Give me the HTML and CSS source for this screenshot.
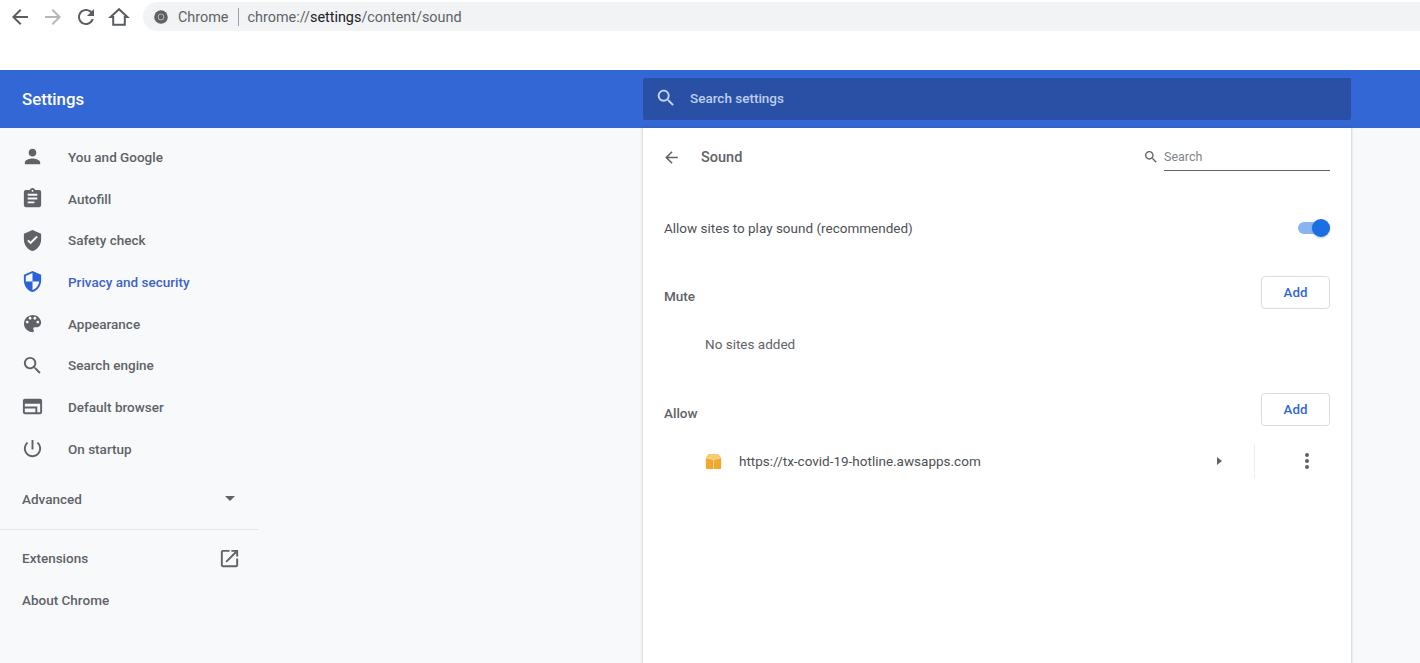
FILE: index.html
```html
<!DOCTYPE html>
<html lang="en">
<head>
    <meta charset="UTF-8">
    <title>Settings - Sound</title>
    <link rel="stylesheet" href="styles.css">
</head>
<body>

<!-- Browser toolbar -->
<div class="toolbar">
    <div class="tool-buttons">
        <svg class="tool-icon" viewBox="0 0 24 24"><path d="M20 11H7.83l5.59-5.59L12 4l-8 8 8 8 1.41-1.41L7.83 13H20v-2z"/></svg>
        <svg class="tool-icon disabled" viewBox="0 0 24 24"><path d="M4 11h12.17l-5.59-5.59L12 4l8 8-8 8-1.41-1.41L16.17 13H4v-2z"/></svg>
        <svg class="tool-icon" viewBox="0 0 24 24"><path d="M17.65 6.35C16.2 4.9 14.21 4 12 4c-4.42 0-7.99 3.58-7.99 8s3.57 8 7.99 8c3.73 0 6.84-2.55 7.73-6h-2.08c-.82 2.33-3.04 4-5.65 4-3.31 0-6-2.69-6-6s2.69-6 6-6c1.66 0 3.14.69 4.22 1.78L13 11h7V4l-2.35 2.35z"/></svg>
        <svg class="tool-icon" viewBox="0 0 24 24"><path class="home-line" d="M12 4.2 3.6 12h2.6v7.8h11.6V12h2.6z"/></svg>
    </div>
    <div class="address-bar">
        <svg class="chrome-icon" viewBox="0 0 16 16">
            <circle cx="8" cy="8" r="6.8" fill="#5f6368"/>
            <circle cx="8" cy="8" r="3.2" fill="#b9bcbf"/>
            <circle cx="8" cy="8" r="2.4" fill="#5f6368"/>
        </svg>
        <span class="origin">Chrome</span>
        <span class="origin-sep"></span>
        <span class="url">chrome://<b>settings</b>/content/sound</span>
    </div>
</div>

<!-- Settings header -->
<header class="header">
    <div class="header-title">Settings</div>
    <div class="header-search">
        <svg class="header-search-icon" viewBox="0 0 24 24"><path d="M15.5 14h-.79l-.28-.27C15.41 12.59 16 11.11 16 9.5 16 5.91 13.09 3 9.5 3S3 5.91 3 9.5 5.91 16 9.5 16c1.61 0 3.09-.59 4.23-1.57l.27.28v.79l5 4.99L20.49 19l-4.99-5zm-6 0C7.01 14 5 11.99 5 9.5S7.01 5 9.5 5 14 7.01 14 9.5 11.99 14 9.5 14z"/></svg>
        <span>Search settings</span>
    </div>
</header>

<div class="main">
    <nav class="sidebar">
        <div class="nav-item">
            <svg class="nav-icon" viewBox="0 0 24 24"><path d="M12 12c2.21 0 4-1.79 4-4s-1.79-4-4-4-4 1.79-4 4 1.79 4 4 4zm0 2c-2.67 0-8 1.34-8 4v2h16v-2c0-2.66-5.33-4-8-4z"/></svg>
            <span class="nav-label">You and Google</span>
        </div>
        <div class="nav-item">
            <svg class="nav-icon" viewBox="0 0 24 24"><path d="M19 3h-4.18C14.4 1.84 13.3 1 12 1c-1.3 0-2.4.84-2.82 2H5c-1.1 0-2 .9-2 2v14c0 1.1.9 2 2 2h14c1.1 0 2-.9 2-2V5c0-1.1-.9-2-2-2zm-7 0c.55 0 1 .45 1 1s-.45 1-1 1-1-.45-1-1 .45-1 1-1zm2 14H7v-2h7v2zm3-4H7v-2h10v2zm0-4H7V7h10v2z"/></svg>
            <span class="nav-label">Autofill</span>
        </div>
        <div class="nav-item">
            <svg class="nav-icon" viewBox="0 0 24 24"><path fill-rule="evenodd" d="M12 1 3 5v6c0 5.55 3.84 10.74 9 12 5.16-1.26 9-6.45 9-12V5l-9-4zm-2 15-3.5-3.5 1.41-1.41L10 13.17l6.09-6.08 1.41 1.41L10 16z"/></svg>
            <span class="nav-label">Safety check</span>
        </div>
        <div class="nav-item active">
            <svg class="nav-icon" viewBox="0 0 24 24"><path d="M12 1 3 5v6c0 5.55 3.84 10.74 9 12 5.16-1.26 9-6.45 9-12V5l-9-4zm0 10.99h7c-.53 4.12-3.28 7.79-7 8.94V12H5V6.3l7-3.11v8.8z"/></svg>
            <span class="nav-label">Privacy and security</span>
        </div>
        <div class="nav-item">
            <svg class="nav-icon" viewBox="0 0 24 24"><path d="M12 3a9 9 0 0 0 0 18c.83 0 1.5-.67 1.5-1.5 0-.39-.15-.74-.39-1.01-.23-.26-.38-.61-.38-.99 0-.83.67-1.5 1.5-1.5H16c2.76 0 5-2.24 5-5 0-4.42-4.03-8-9-8zm-5.5 9c-.83 0-1.5-.67-1.5-1.5S5.67 9 6.5 9 8 9.67 8 10.5 7.33 12 6.5 12zm3-4C8.67 8 8 7.33 8 6.5S8.67 5 9.5 5s1.5.67 1.5 1.5S10.33 8 9.5 8zm5 0c-.83 0-1.5-.67-1.5-1.5S13.67 5 14.5 5s1.5.67 1.5 1.5S15.33 8 14.5 8zm3 4c-.83 0-1.5-.67-1.5-1.5S16.67 9 17.5 9s1.5.67 1.5 1.5-.67 1.5-1.5 1.5z"/></svg>
            <span class="nav-label">Appearance</span>
        </div>
        <div class="nav-item">
            <svg class="nav-icon" viewBox="0 0 24 24"><path d="M15.5 14h-.79l-.28-.27C15.41 12.59 16 11.11 16 9.5 16 5.91 13.09 3 9.5 3S3 5.91 3 9.5 5.91 16 9.5 16c1.61 0 3.09-.59 4.23-1.57l.27.28v.79l5 4.99L20.49 19l-4.99-5zm-6 0C7.01 14 5 11.99 5 9.5S7.01 5 9.5 5 14 7.01 14 9.5 11.99 14 9.5 14z"/></svg>
            <span class="nav-label">Search engine</span>
        </div>
        <div class="nav-item">
            <svg class="nav-icon" viewBox="0 0 24 24"><path fill-rule="evenodd" d="M4 4h16c1.1 0 2 .9 2 2v12c0 1.1-.9 2-2 2H4c-1.1 0-2-.9-2-2V6c0-1.1.9-2 2-2zm0 5v9h16V9H4zm0 3h11v2H4v-2zm11 0h2v6h-2v-6z"/></svg>
            <span class="nav-label">Default browser</span>
        </div>
        <div class="nav-item">
            <svg class="nav-icon" viewBox="0 0 24 24"><path d="M13 3h-2v10h2V3zm4.83 2.17-1.42 1.42C17.99 7.86 19 9.81 19 12c0 3.87-3.13 7-7 7s-7-3.13-7-7c0-2.19 1.01-4.14 2.58-5.42L6.17 5.17C4.23 6.82 3 9.26 3 12c0 4.97 4.03 9 9 9s9-4.03 9-9c0-2.74-1.23-5.18-3.17-6.83z"/></svg>
            <span class="nav-label">On startup</span>
        </div>

        <div class="nav-advanced">
            <span>Advanced</span>
            <span class="caret-down"></span>
        </div>
        <div class="nav-divider"></div>
        <div class="nav-link">
            <span>Extensions</span>
            <svg class="nav-icon" viewBox="0 0 24 24"><path d="M19 19H5V5h7V3H5c-1.11 0-2 .9-2 2v14c0 1.1.89 2 2 2h14c1.1 0 2-.9 2-2v-7h-2v7zM14 3v2h3.59l-9.83 9.83 1.41 1.41L19 6.41V10h2V3h-7z"/></svg>
        </div>
        <div class="nav-link">
            <span>About Chrome</span>
        </div>
    </nav>

    <section class="card">
        <div class="card-head">
            <svg class="back-icon" viewBox="0 0 24 24"><path d="M20 11H7.83l5.59-5.59L12 4l-8 8 8 8 1.41-1.41L7.83 13H20v-2z"/></svg>
            <h1 class="card-title">Sound</h1>
            <svg class="sub-search-icon" viewBox="0 0 24 24"><path d="M15.5 14h-.79l-.28-.27C15.41 12.59 16 11.11 16 9.5 16 5.91 13.09 3 9.5 3S3 5.91 3 9.5 5.91 16 9.5 16c1.61 0 3.09-.59 4.23-1.57l.27.28v.79l5 4.99L20.49 19l-4.99-5zm-6 0C7.01 14 5 11.99 5 9.5S7.01 5 9.5 5 14 7.01 14 9.5 11.99 14 9.5 14z"/></svg>
            <div class="sub-search">Search</div>
        </div>

        <div class="toggle-row">
            <span>Allow sites to play sound (recommended)</span>
            <span class="toggle"><span class="toggle-knob"></span></span>
        </div>

        <div class="list-head mute-head">
            <span class="list-title">Mute</span>
            <button class="add-btn" type="button">Add</button>
        </div>
        <div class="no-sites">No sites added</div>

        <div class="list-head allow-head">
            <span class="list-title">Allow</span>
            <button class="add-btn" type="button">Add</button>
        </div>
        <div class="site-row">
            <svg class="site-icon" viewBox="0 0 16 16">
                <path fill="#f0a92f" d="M3.5 1.2h9L15.2 4.6V14a1 1 0 0 1-1 1H1.800a1 1 0 0 1-1-1V4.600z"/>
                <path fill="#f8ca74" d="M3.500 1.200h9l2.700 3.400L8 6.200.8 4.600z"/>
                <path fill="none" stroke="#fbdca4" stroke-width=".7" d="M.8 4.600 8 6.200l7.200-1.600M8 6.200V15"/>
            </svg>
            <span class="site-url">https://tx-covid-19-hotline.awsapps.com</span>
            <span class="caret-right"></span>
            <span class="site-sep"></span>
            <span class="more-dots"><i></i><i></i><i></i></span>
        </div>
    </section>
</div>

</body>
</html>
```

FILE: styles.css
```css
* {
    box-sizing: border-box;
}

html, body {
    height: 100%;
}

body {
    margin: 0;
    font-family: Roboto, "Liberation Sans", sans-serif;
    background: #f8f9fa;
    color: #5f6368;
    overflow: hidden;
}

/* browser toolbar */
.toolbar {
    height: 70px;
    background: #fff;
    display: flex;
    align-items: flex-start;
    padding: 2px 0 0 8px;
}

.tool-buttons {
    display: flex;
    gap: 9px;
    height: 30px;
    align-items: center;
    margin-right: 12px;
}

.tool-icon {
    width: 24px;
    height: 24px;
    fill: #5a5d61;
}

.tool-icon.disabled {
    fill: #b4b6b8;
}

.home-line {
    fill: none;
    stroke: #5a5d61;
    stroke-width: 2;
}

.address-bar {
    flex: 1;
    height: 29px;
    background: #f1f3f4;
    border-radius: 15px 0 0 15px;
    display: flex;
    align-items: center;
    padding-left: 10px;
    padding-top: 1px;
    font-size: 14.4px;
}

.chrome-icon {
    width: 16px;
    height: 16px;
    margin-right: 9px;
}

.origin {
    color: #5f6368;
}

.origin-sep {
    width: 1px;
    height: 18px;
    background: #9aa0a6;
    margin: 0 9px;
}

.url {
    color: #5f6368;
}

.url b {
    font-weight: 400;
    color: #202124;
}

/* settings header */
.header {
    height: 58px;
    background: #3367d6;
    display: flex;
    align-items: center;
    padding-left: 22px;
}

.header-title {
    width: 621px;
    color: #fff;
    font-size: 16.8px;
    font-weight: 500;
}

.header-search {
    width: 708px;
    height: 42px;
    background: #2a50a6;
    border-radius: 2px;
    display: flex;
    align-items: center;
    padding-left: 11px;
    padding-bottom: 2px;
    color: #bdcdf0;
    font-size: 13.5px;
    font-weight: 500;
}

.header-search-icon {
    width: 22px;
    height: 22px;
    fill: #c6d4f2;
    margin-left: 1px;
    margin-right: 13px;
}

/* layout */
.main {
    display: flex;
    height: 535px;
}

.sidebar {
    width: 258px;
    padding-top: 8px;
    margin-right: 385px;
    font-size: 13.5px;
    font-weight: 500;
}

.nav-item {
    height: 41.7px;
    display: flex;
    align-items: center;
    padding-left: 21px;
}

.nav-item .nav-icon {
    margin-right: 24px;
}

.nav-item.active {
    color: #3f63c8;
}

.nav-item.active .nav-icon {
    fill: #2a62d8;
}

.nav-icon {
    width: 23px;
    height: 23px;
    fill: #5f6368;
    flex-shrink: 0;
}

.nav-advanced {
    height: 42px;
    margin-top: 8px;
    padding: 0 23px 0 22px;
    display: flex;
    align-items: center;
    justify-content: space-between;
}

.caret-down {
    width: 0;
    height: 0;
    border-left: 5px solid transparent;
    border-right: 5px solid transparent;
    border-top: 5px solid #5f6368;
}

.nav-divider {
    height: 1px;
    background: #e3e5e8;
    margin-top: 9px;
    margin-bottom: 8px;
}

.nav-link {
    height: 41.7px;
    display: flex;
    align-items: center;
    justify-content: space-between;
    padding: 0 17px 0 22px;
}

/* sound card */
.card {
    width: 708px;
    background: #fff;
    box-shadow: 0 0 2px 1px rgba(60, 64, 67, 0.2);
    padding: 0 21px;
    font-size: 13.5px;
}

.card-head {
    height: 58px;
    display: flex;
    align-items: center;
}

.back-icon {
    width: 19px;
    height: 19px;
    fill: #5f6368;
    margin-left: -2px;
    margin-right: 20px;
}

.card-title {
    flex: 1;
    margin: 0;
    font-size: 14.5px;
    font-weight: 500;
    color: #5f6368;
}

.sub-search-icon {
    width: 16px;
    height: 16px;
    fill: #5f6368;
    margin-right: 5px;
}

.sub-search {
    width: 166px;
    height: 27px;
    border-bottom: 1px solid #5f6368;
    font-size: 12.5px;
    color: #80868b;
    display: flex;
    align-items: center;
}

.toggle-row {
    height: 24px;
    margin-top: 30px;
    display: flex;
    align-items: center;
    justify-content: space-between;
    color: #4d5156;
}

.toggle {
    display: block;
    width: 32px;
    height: 12px;
    border-radius: 6px;
    background: #8ab4f0;
    position: relative;
}

.toggle-knob {
    position: absolute;
    right: 0;
    top: -3px;
    width: 18px;
    height: 18px;
    border-radius: 50%;
    background: #1a6fe3;
    box-shadow: 0 1px 2px rgba(60, 64, 67, 0.3);
}

.list-head {
    display: flex;
    align-items: center;
    justify-content: space-between;
    height: 33px;
}

.mute-head {
    margin-top: 36px;
}

.allow-head {
    margin-top: 37px;
}

.list-title {
    font-weight: 500;
    color: #5f6368;
    position: relative;
    top: 3px;
}

.add-btn {
    width: 69px;
    height: 33px;
    background: #fff;
    border: 1px solid #dadce0;
    border-radius: 4px;
    color: #3367d6;
    font-family: inherit;
    font-size: 13.3px;
    font-weight: 500;
    padding: 0;
}

.no-sites {
    height: 24px;
    margin-top: 23px;
    padding-left: 41px;
    line-height: 24px;
    color: #5f6368;
}

.site-row {
    height: 34px;
    margin-top: 18px;
    display: flex;
    align-items: center;
    padding-left: 41px;
    color: #4d5156;
}

.site-icon {
    width: 17px;
    height: 17px;
    margin-right: 17px;
}

.site-url {
    width: 478px;
}

.caret-right {
    width: 0;
    height: 0;
    border-top: 4.5px solid transparent;
    border-bottom: 4.5px solid transparent;
    border-left: 5px solid #5f6368;
}

.site-sep {
    width: 1px;
    height: 34px;
    background: #eceded;
    margin-left: 32px;
}

.more-dots {
    display: flex;
    flex-direction: column;
    gap: 2px;
    margin-left: 50px;
}

.more-dots i {
    display: block;
    width: 4px;
    height: 4px;
    border-radius: 50%;
    background: #5f6368;
}
```
